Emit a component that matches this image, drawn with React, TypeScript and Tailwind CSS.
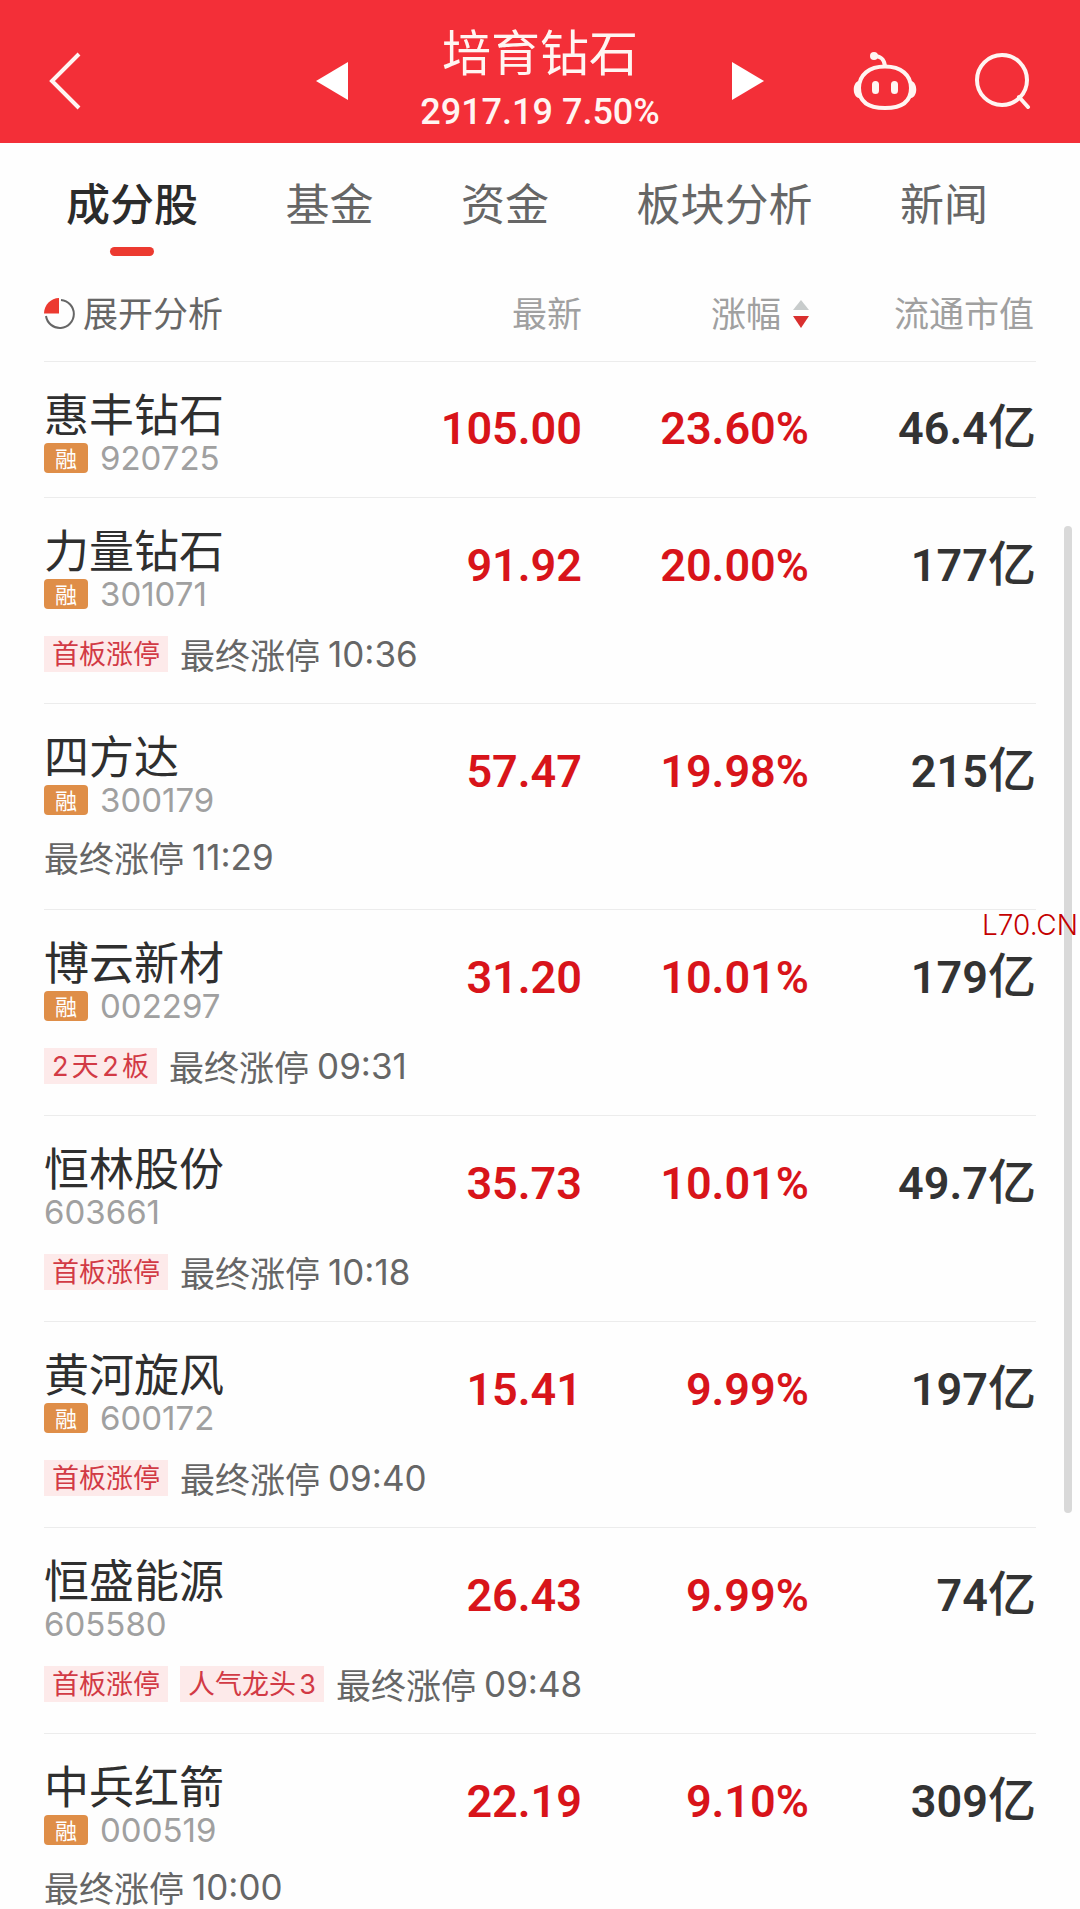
import { useState } from 'react';

type Stock = {
  name: string;
  code: string;
  margin: boolean;
  price: string;
  change: string;
  cap: string;
  tags?: string[];
  limitTime?: string;
};

const tabs = ['成分股', '基金', '资金', '板块分析', '新闻'];

const stocks: Stock[] = [
  { name: '惠丰钻石', code: '920725', margin: true, price: '105.00', change: '23.60%', cap: '46.4' },
  { name: '力量钻石', code: '301071', margin: true, price: '91.92', change: '20.00%', cap: '177', tags: ['首板涨停'], limitTime: '10:36' },
  { name: '四方达', code: '300179', margin: true, price: '57.47', change: '19.98%', cap: '215', limitTime: '11:29' },
  { name: '博云新材', code: '002297', margin: true, price: '31.20', change: '10.01%', cap: '179', tags: ['2天2板'], limitTime: '09:31' },
  { name: '恒林股份', code: '603661', margin: false, price: '35.73', change: '10.01%', cap: '49.7', tags: ['首板涨停'], limitTime: '10:18' },
  { name: '黄河旋风', code: '600172', margin: true, price: '15.41', change: '9.99%', cap: '197', tags: ['首板涨停'], limitTime: '09:40' },
  { name: '恒盛能源', code: '605580', margin: false, price: '26.43', change: '9.99%', cap: '74', tags: ['首板涨停', '人气龙头3'], limitTime: '09:48' },
  { name: '中兵红箭', code: '000519', margin: true, price: '22.19', change: '9.10%', cap: '309', limitTime: '10:00' },
];

function RobotIcon() {
  return (
    <svg width="64" height="60" viewBox="0 0 64 60" fill="none" stroke="currentColor" strokeWidth="4">
      <circle cx="21" cy="5" r="4" fill="currentColor" stroke="none" />
      <path d="M21 5c7 0 10 3 11 10" />
      <path d="M32 15.500C48 15.500 58 24 58 37C58 51 49 57 32 57C15 57 6 51 6 37C6 24 16 15.500 32 15.500Z" />
      <path d="M6 30C-1 31-1 46 6 47ZM58 30C65 31 65 46 58 47Z" fill="currentColor" stroke="none" />
      <path d="M22.500 33.500v6M41.500 33.500v6" strokeWidth="7" strokeLinecap="round" />
    </svg>
  );
}

function Header() {
  return (
    <header className="grid h-[143px] shrink-0 grid-cols-[1fr_auto_1fr] items-center bg-[#f32f38] text-[#fff5f2]">
      <button aria-label="返回" className="ml-12 mt-4.5 justify-self-start">
        <svg width="34" height="58" viewBox="0 0 34 58" fill="none" stroke="currentColor" strokeWidth="4">
          <path d="M31 2 4 29 31 56" />
        </svg>
      </button>

      <div className="flex items-center gap-[74px]">
        <button aria-label="上一个板块" className="mt-4.5 text-white">
          <svg width="32" height="38" viewBox="0 0 32 38" fill="currentColor">
            <path d="M0 19 32 0v38Z" />
          </svg>
        </button>
        <div className="flex w-[236px] flex-col items-center pt-5">
          <h1 className="text-[49px] leading-[60px]">培育钻石</h1>
          <p className="whitespace-nowrap font-['Roboto',sans-serif] text-4xl font-medium leading-[64px]">2917.19 7.50%</p>
        </div>
        <button aria-label="下一个板块" className="mt-4.5 text-white">
          <svg width="32" height="38" viewBox="0 0 32 38" fill="currentColor">
            <path d="M32 19 0 0v38Z" />
          </svg>
        </button>
      </div>

      <div className="mr-[49px] mt-4.5 flex items-center gap-[58px] justify-self-end">
        <button aria-label="智能助手">
          <RobotIcon />
        </button>
        <button aria-label="搜索">
          <svg width="56" height="56" viewBox="0 0 56 56" fill="none" stroke="currentColor" strokeWidth="4">
            <circle cx="27" cy="27" r="25" />
            <path d="M44 44l9 10" strokeLinecap="round" />
          </svg>
        </button>
      </div>
    </header>
  );
}

function StockRows({ stock }: { stock: Stock }) {
  const { name, code, margin, price, change, cap, tags, limitTime } = stock;

  return (
    <tbody className="border-t border-[#ececec]">
      <tr className="h-[136px]">
        <th scope="row" className="pt-[26px] text-left align-top font-normal">
          <div className="text-[45px] leading-[50px] text-[#2f2f2f]">{name}</div>
          <div className="flex h-10 items-center gap-3">
            {margin && (
              <span className="flex h-[30px] w-11 justify-center rounded bg-[#df8e48] text-[22px] leading-[28px] text-white">
                融
              </span>
            )}
            <span className="font-['Inter',sans-serif] text-[33px] leading-10 text-[#a0a0a0]">{code}</span>
          </div>
        </th>
        <td className="text-right font-['Roboto',sans-serif] text-[45px] font-semibold text-[#d8141a]">{price}</td>
        <td className="text-right font-['Roboto',sans-serif] text-[45px] font-semibold text-[#d8141a]">{change}</td>
        <td className="text-right font-['Roboto',sans-serif] text-[45px] font-semibold text-[#333]">
          {cap}
          <span className="font-['Noto_Sans_CJK_SC',sans-serif] text-5xl font-medium">亿</span>
        </td>
      </tr>
      {limitTime && (
        <tr className="h-[70px]">
          <td colSpan={4} className="align-top">
            <div className={tags ? 'flex h-[42px] items-center gap-3' : 'flex h-9 items-center'}>
              {tags?.map((tag) => (
                <span
                  key={tag}
                  className="h-9 bg-[#fdeaea] px-2 font-['Inter','Noto_Sans_CJK_SC',sans-serif] text-[27px] leading-[38px] text-[#d23a45] [text-autospace:normal]"
                >
                  {tag}
                </span>
              ))}
              <span className="flex items-center gap-2 text-[#666]">
                <span className="text-[35px] leading-9">最终涨停</span>
                <time className="font-['Inter',sans-serif] text-[35px] leading-9">{limitTime}</time>
              </span>
            </div>
          </td>
        </tr>
      )}
    </tbody>
  );
}

export default function App() {
  const [active, setActive] = useState(tabs[0]);

  return (
    <div className="flex h-screen flex-col overflow-hidden bg-[#fefefe] font-['Noto_Sans_CJK_SC',sans-serif]">
      <Header />

      <main className="relative min-h-0 flex-1 overflow-hidden">
        <nav className="flex h-[124px] items-start justify-between pl-[66px] pr-[92px] pt-7">
          {tabs.map((tab) => (
            <button
              key={tab}
              onClick={() => setActive(tab)}
              className={
                tab === active
                  ? 'flex flex-col items-center text-[44px] font-medium leading-[62px] text-[#2b2b2b]'
                  : 'text-[44px] leading-[62px] text-[#666]'
              }
            >
              {tab}
              {tab === active && <span className="mt-3.5 h-[9px] w-11 rounded-full bg-[#ec3a30]" />}
            </button>
          ))}
        </nav>

        <div className="mx-11">
          <table className="w-full table-fixed border-collapse">
            <thead>
              <tr className="h-[94px] text-[35px] leading-10 text-[#a0a0a0]">
                <th className="pb-1 text-left font-normal">
                  <button className="flex items-center gap-2 text-[#666]">
                    <svg width="31" height="31" viewBox="0 0 31 31" fill="none" className="mt-1">
                      <path d="M17 2A14 14 0 1 1 2 18" stroke="#666" strokeWidth="2" />
                      <path d="M15 0V15.500H0C0 7 7 0 15 0Z" fill="#ec3a30" />
                    </svg>
                    展开分析
                  </button>
                </th>
                <th className="w-[200px] pb-1 text-right font-normal">最新</th>
                <th className="w-[227px] pb-1 font-normal">
                  <button className="ml-auto flex items-center gap-3">
                    涨幅
                    <svg width="16" height="28" viewBox="0 0 16 28" className="mt-1">
                      <path d="M8 0 16 10H0Z" fill="#c8cccc" />
                      <path d="M8 28 16 16H0Z" fill="#d9302f" />
                    </svg>
                  </button>
                </th>
                <th className="w-[227px] pb-1 pr-0.5 text-right font-normal">流通市值</th>
              </tr>
            </thead>
            {stocks.map((stock) => (
              <StockRows key={stock.code} stock={stock} />
            ))}
          </table>
        </div>

        <div className="absolute right-2 top-[383px] h-[987px] w-2 rounded-full bg-[#d9d9d9]" />
        <span className="absolute right-0.5 top-[764px] font-['Inter',sans-serif] text-[28px] font-light leading-9 text-[#c40000]">
          L70.CN
        </span>
      </main>
    </div>
  );
}
